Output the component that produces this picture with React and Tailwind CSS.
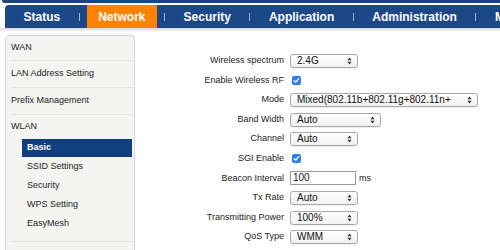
import React from 'react';

const tabs = ['Status', 'Network', 'Security', 'Application', 'Administration', 'Ma'];

function Arrows() {
  return (
    <svg width="5" height="8" viewBox="0 0 5 8" className="shrink-0">
      <path d="M2.5 0.5 L4.6 3.2 L0.4 3.2 Z" fill="#333" />
      <path d="M2.5 7.5 L4.6 4.8 L0.4 4.8 Z" fill="#333" />
    </svg>
  );
}

function Select({ value, className }) {
  return (
    <div
      className={`flex items-center justify-between h-[14px] border border-[#a8a8a8] rounded-[3px] bg-gradient-to-b from-white to-[#f1f1f1] shadow-[0_1px_0_rgba(0,0,0,0.06)] pl-[6px] pr-[5px] text-[10px] leading-none text-[#111] ${className}`}
    >
      <span className="whitespace-nowrap overflow-hidden">{value}</span>
      <Arrows />
    </div>
  );
}

function Check() {
  return (
    <div className="w-[9px] h-[9px] ml-[2px] rounded-[2px] bg-[#2b7ef6] flex items-center justify-center">
      <svg width="7" height="7" viewBox="0 0 7 7">
        <path d="M1.2 3.7 L2.8 5.2 L5.8 1.6" stroke="white" strokeWidth="1.3" fill="none" strokeLinecap="round" strokeLinejoin="round" />
      </svg>
    </div>
  );
}

function Row({ label, children }) {
  return (
    <div className="flex items-center h-[19.6px]">
      <div className="w-[155px] text-right pr-[6px] text-[9px] text-[#222] whitespace-nowrap">{label}</div>
      <div className="flex items-center">{children}</div>
    </div>
  );
}

export default function App() {
  return (
    <div className="w-[500px] h-[250px] overflow-hidden bg-white" style={{ fontFamily: '"Liberation Sans", Arial, sans-serif' }}>
      {/* top strip */}
      <div className="h-[3px] ml-[2px] bg-[#1a4484] rounded-bl-[3px]" />

      {/* main nav */}
      <div className="mt-[2px] ml-[5px] h-[23px] bg-[#1c4888] rounded-tl-[4px] flex items-stretch pl-[7px] whitespace-nowrap overflow-hidden">
        {tabs.map((t, i) => (
          <React.Fragment key={t}>
            {i > 0 && <div className="self-center shrink-0 w-px h-[8px] mx-[7px] bg-[#9fb3d3]" />}
            <div
              className={`flex items-center shrink-0 px-[11.5px] text-[12px] font-bold ${t === 'Network' ? 'bg-[#ff8100] text-white' : 'text-white'}`}
            >
              {t}
            </div>
          </React.Fragment>
        ))}
      </div>
      <div className="h-[4px] bg-gradient-to-b from-[#d6d6d6] to-white" />

      <div className="flex items-start">
        {/* sidebar */}
        <div className="ml-[5px] mt-[3px] w-[130px] shrink-0 h-[220px] bg-[#f4f5f3] border border-[#d6d6d6] rounded-t-[4px] text-[9px] text-[#222]">
          <div className="ml-[5px] h-[25px] flex items-center border-b border-[#e3e3e3]">WAN</div>
          <div className="ml-[5px] h-[27px] flex items-center border-b border-[#e3e3e3]">LAN Address Setting</div>
          <div className="ml-[5px] h-[27px] flex items-center border-b border-[#e3e3e3]">Prefix Management</div>
          <div className="ml-[5px] border-b border-[#e3e3e3] pb-[8px]">
            <div className="h-[24px] flex items-center">WLAN</div>
            <div className="ml-[11px] mr-[2px] h-[18px] flex items-center pl-[5px] bg-[#123f80] text-white font-bold">Basic</div>
            <div className="ml-[16px] h-[19px] flex items-center">SSID Settings</div>
            <div className="ml-[16px] h-[19px] flex items-center">Security</div>
            <div className="ml-[16px] h-[19px] flex items-center">WPS Setting</div>
            <div className="ml-[16px] h-[19px] flex items-center">EasyMesh</div>
          </div>
        </div>

        {/* form */}
        <div className="mt-[19px]">
          <Row label="Wireless spectrum"><Select value="2.4G" className="w-[68px]" /></Row>
          <Row label="Enable Wireless RF"><Check /></Row>
          <Row label="Mode"><Select value="Mixed(802.11b+802.11g+802.11n+" className="w-[188px]" /></Row>
          <Row label="Band Width"><Select value="Auto" className="w-[91px]" /></Row>
          <Row label="Channel"><Select value="Auto" className="w-[68px]" /></Row>
          <Row label="SGI Enable"><Check /></Row>
          <Row label="Beacon Interval">
            <div className="w-[66px] h-[14px] border border-[#9a9a9a] text-[10px] leading-none flex items-center pl-[2px] text-[#111]">100</div>
            <span className="ml-[3px] text-[9px] text-[#222]">ms</span>
          </Row>
          <Row label="Tx Rate"><Select value="Auto" className="w-[68px]" /></Row>
          <Row label="Transmitting Power"><Select value="100%" className="w-[68px]" /></Row>
          <Row label="QoS Type"><Select value="WMM" className="w-[68px]" /></Row>
        </div>
      </div>
    </div>
  );
}
